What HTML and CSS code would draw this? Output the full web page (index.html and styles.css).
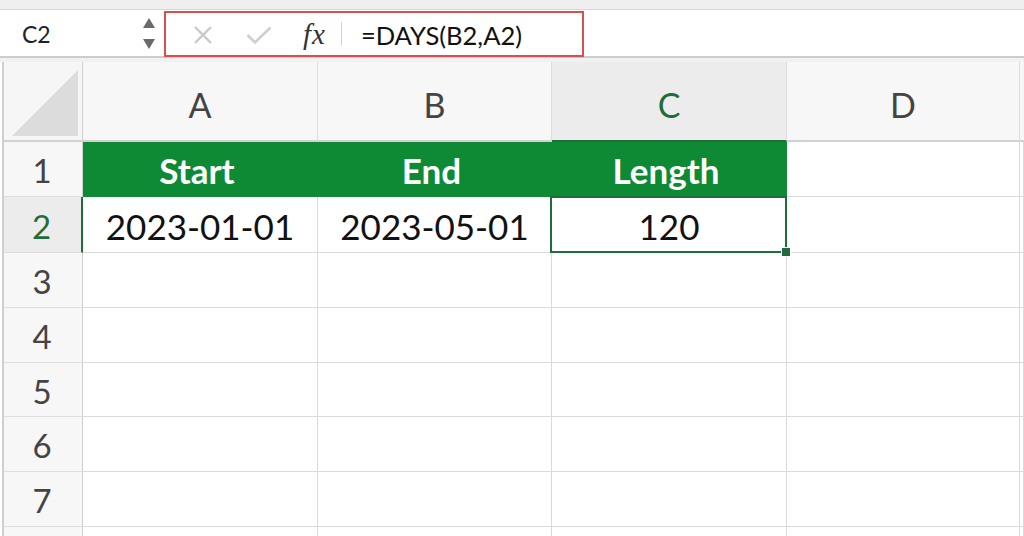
FILE: index.html
```html
<!DOCTYPE html>
<html>
<head>
<meta charset="utf-8">
<link rel="stylesheet" href="styles.css">
</head>
<body>
<div class="topstrip"></div>
<div class="formulabar">
  <div class="namebox">
    <span class="cellref">C2</span>
    <svg class="stepper" width="14" height="32" viewBox="0 0 14 32">
      <path d="M7 0 L13 10 L1 10 Z" fill="#6a6a6a"/>
      <path d="M1 21 L13 21 L7 31 Z" fill="#6a6a6a"/>
    </svg>
  </div>
  <div class="fxbox">
    <svg class="ico-x" width="20" height="18" viewBox="0 0 20 18">
      <path d="M2 1 L18 17 M18 1 L2 17" stroke="#c9c9c9" stroke-width="2.4" fill="none"/>
    </svg>
    <svg class="ico-check" width="26" height="18" viewBox="0 0 26 18">
      <path d="M1.5 9 L9 16.5 L24.5 1.5" stroke="#cfcfcf" stroke-width="2.6" fill="none"/>
    </svg>
    <span class="fx">fx</span>
    <span class="sep"></span>
    <span class="formula">=DAYS(B2,A2)</span>
  </div>
  <div class="fill"></div>
</div>
<div class="gap"></div>
<div class="sheet">
  <div class="corner"><svg width="66" height="66" viewBox="0 0 66 66"><path d="M66 0 L66 66 L0 66 Z" fill="#dcdcdc"/></svg></div>
  <div class="colhead">A</div>
  <div class="colhead">B</div>
  <div class="colhead sel">C</div>
  <div class="colhead">D</div>
  <div class="colhead last"></div>

  <div class="rowhead">1</div>
  <div class="cell green">Start</div>
  <div class="cell green">End</div>
  <div class="cell green">Length</div>
  <div class="cell"></div>
  <div class="cell"></div>

  <div class="rowhead sel">2</div>
  <div class="cell">2023-01-01</div>
  <div class="cell">2023-05-01</div>
  <div class="cell active">120</div>
  <div class="cell"></div>
  <div class="cell"></div>

  <div class="rowhead">3</div>
  <div class="cell"></div><div class="cell"></div><div class="cell"></div><div class="cell"></div><div class="cell"></div>
  <div class="rowhead">4</div>
  <div class="cell"></div><div class="cell"></div><div class="cell"></div><div class="cell"></div><div class="cell"></div>
  <div class="rowhead">5</div>
  <div class="cell"></div><div class="cell"></div><div class="cell"></div><div class="cell"></div><div class="cell"></div>
  <div class="rowhead">6</div>
  <div class="cell"></div><div class="cell"></div><div class="cell"></div><div class="cell"></div><div class="cell"></div>
  <div class="rowhead">7</div>
  <div class="cell"></div><div class="cell"></div><div class="cell"></div><div class="cell"></div><div class="cell"></div>
  <div class="rowhead"></div>
  <div class="cell"></div><div class="cell"></div><div class="cell"></div><div class="cell"></div><div class="cell"></div>
</div>
</body>
</html>
```

FILE: styles.css
```css
* { box-sizing: border-box; }
html, body {
  margin: 0;
  padding: 0;
  width: 1024px;
  height: 536px;
  overflow: hidden;
  background: #ffffff;
  font-family: Lato, "Open Sans", sans-serif;
}
.topstrip {
  height: 10px;
  background: #efefef;
  border-bottom: 1px solid #d8d8d8;
}
.formulabar {
  display: flex;
  height: 48px;
  background: #ffffff;
  border-bottom: 2px solid #cdcdcd;
}
.namebox {
  width: 164px;
  display: flex;
  align-items: center;
  padding-left: 22px;
}
.cellref {
  font-size: 23px;
  color: #222;
  flex: 1;
  padding-top: 2px;
}
.stepper {
  margin-right: 8px;
  margin-top: 2px;
}
.fxbox {
  width: 420px;
  height: 46px;
  margin-top: 1px;
  border: 2px solid #d65050;
  display: flex;
  align-items: center;
  padding-left: 27px;
}
.ico-x { margin-top: 1px; }
.ico-check { margin-left: 33px; margin-top: 1px; }
.fx {
  font-family: "Liberation Serif", "DejaVu Serif", serif;
  font-style: italic;
  font-size: 29px;
  color: #333;
  margin-left: 31px;
  letter-spacing: 1px;
}
.sep {
  width: 1px;
  height: 24px;
  background: #d4d4d4;
  margin-left: 15px;
}
.formula {
  font-size: 25.5px;
  color: #111;
  margin-left: 19px;
  padding-top: 1px;
}
.fill { flex: 1; }
.gap {
  height: 4px;
  background: #f1f1f1;
}
.sheet {
  display: grid;
  grid-template-columns: 79px 235px 234px 235px 233px 1fr;
  grid-template-rows: 80px 55px 56px 55px 55px 54px 55px 55px 55px;
  margin-left: 2px;
  border-left: 2px solid #cfcfcf;
  overflow: hidden;
}
.corner {
  background: #f6f6f6;
  border-right: 1px solid #cfcfcf;
  border-bottom: 2px solid #d2d2d2;
  display: flex;
  align-items: flex-end;
  justify-content: flex-end;
  padding: 0 4px 4px 0;
}
.colhead {
  background: #f7f7f7;
  border-right: 1px solid #dedede;
  border-bottom: 2px solid #d2d2d2;
  display: flex;
  align-items: center;
  justify-content: center;
  font-size: 34px;
  color: #444;
  padding-top: 6px;
}
.colhead.sel {
  background: #ececec;
  color: #1e6e3c;
  border-bottom: 2px solid #1e6e3c;
}
.colhead.last { border-right: none; }
.rowhead {
  background: #f7f7f7;
  border-right: 1px solid #cfcfcf;
  border-bottom: 1px solid #dedede;
  display: flex;
  align-items: center;
  justify-content: center;
  font-size: 33px;
  color: #444;
  padding-top: 2px;
  padding-right: 2px;
}
.rowhead.sel {
  background: #ececec;
  color: #1e6e3c;
  border-right: 2px solid #1e6e3c;
}
.cell {
  border-right: 1px solid #dadada;
  border-bottom: 1px solid #dadada;
  display: flex;
  align-items: center;
  justify-content: center;
  font-size: 35px;
  color: #111;
  padding-top: 2px;
}
.cell.green {
  background: #0e8a35;
  border-right-color: #0e8a35;
  border-bottom-color: #0e8a35;
  color: #ffffff;
  font-weight: 700;
  font-size: 35px;
  padding-right: 6px;
}
.cell.active {
  position: relative;
}
.cell.active::before {
  content: "";
  position: absolute;
  left: -2px;
  top: -1px;
  right: -1px;
  bottom: -1px;
  border: 2px solid #1e6e3c;
}
.cell.active::after {
  content: "";
  position: absolute;
  right: -5px;
  bottom: -5px;
  width: 8px;
  height: 8px;
  background: #1e6e3c;
  border: 1px solid #ffffff;
}
```
